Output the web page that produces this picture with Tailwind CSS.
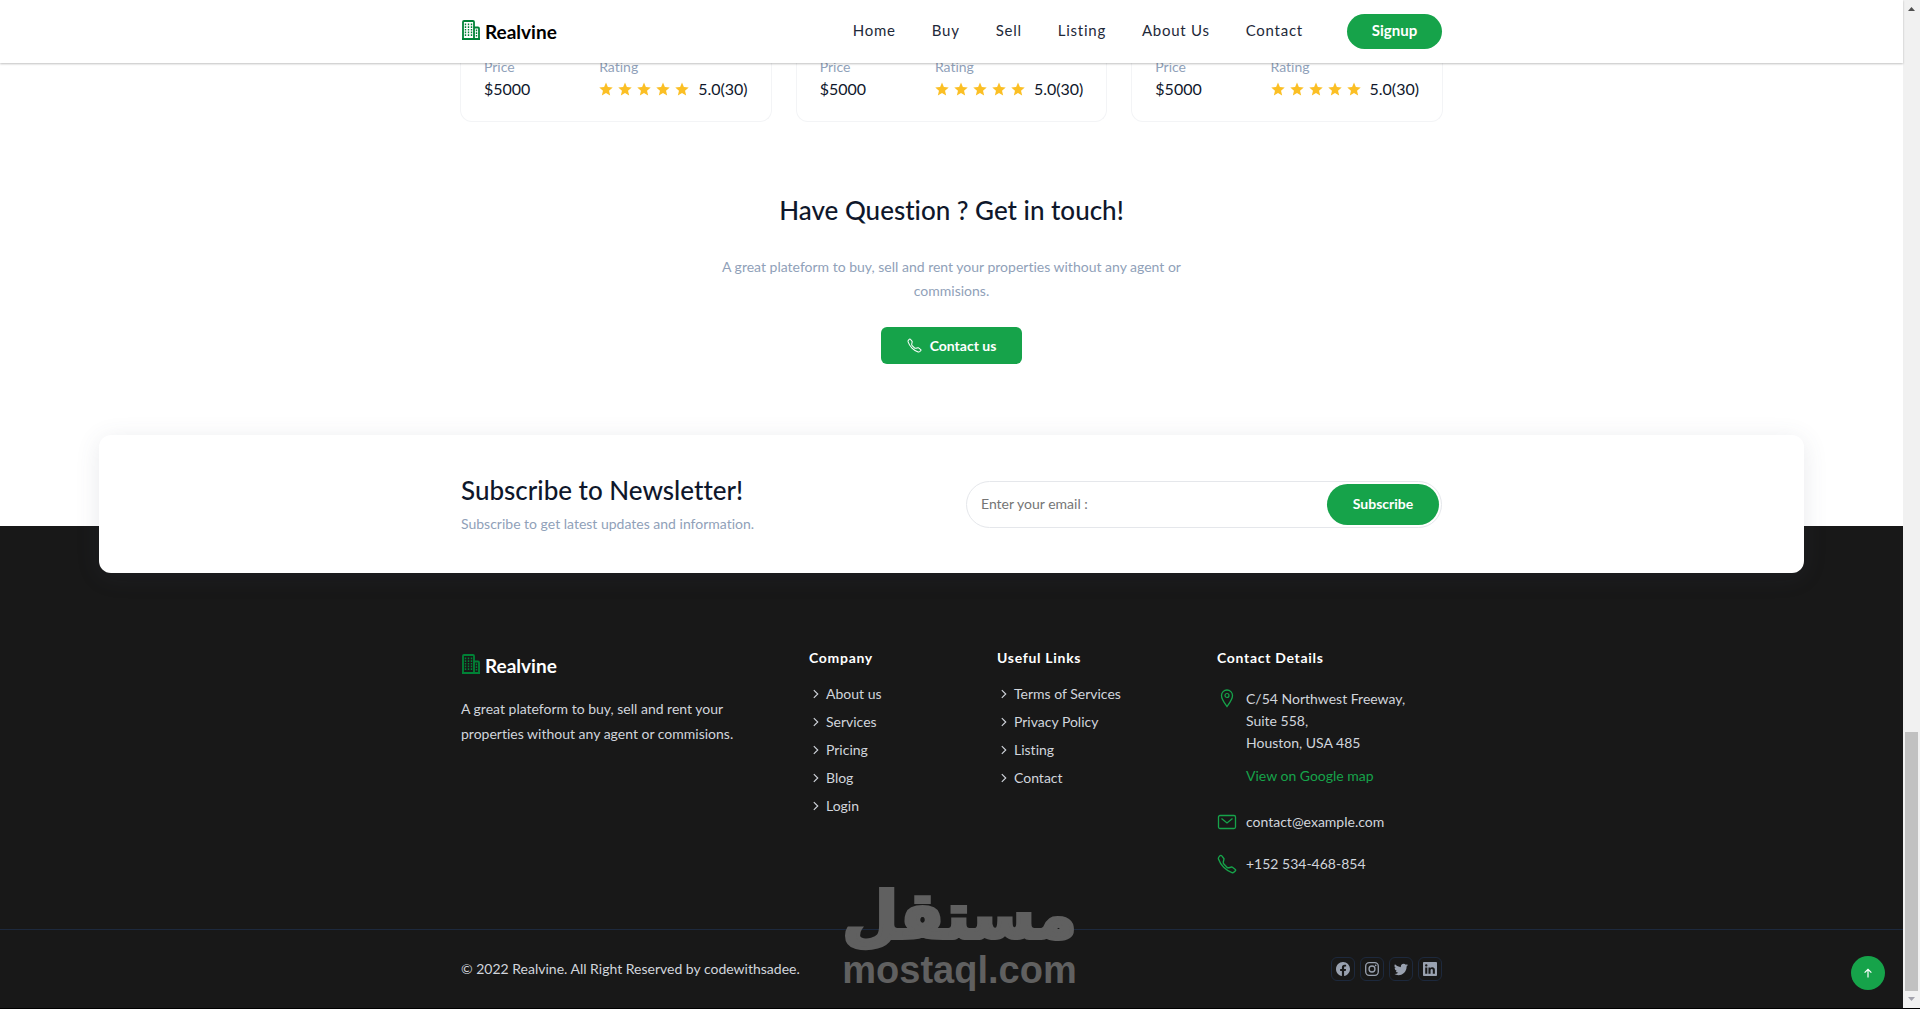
<!DOCTYPE html>
<html lang="en">
<head>
    <meta charset="UTF-8">
    <meta name="viewport" content="width=device-width, initial-scale=1.0">
    <title>Realvine - Real Estate</title>
    <script src="https://cdn.jsdelivr.net/npm/@tailwindcss/browser@4"></script>
    <style>
        body {
            font-family: Lato, 'Open Sans', sans-serif;
            font-variant-ligatures: none;
        }
    </style>
</head>
<body class="bg-black text-slate-900">
    <!-- Icon set -->
    <svg class="hidden">
        <symbol id="buildings" viewBox="0 0 18 20">
            <path d="M1 19V2q0-1 1-1h9q1 0 1 1v17M12 7.500h4q1 0 1 1V19M0 19h18" fill="none" stroke="currentColor" stroke-width="1.800"/>
            <path d="M3.500 3.500v13M6.500 3.500v13M9.500 3.500v13M14.500 9.500v8" fill="none" stroke="currentColor" stroke-width="1.400" stroke-dasharray="1.700 1"/>
        </symbol>
        <symbol id="star" viewBox="0 0 24 24">
            <path d="M12 1l3.200 7.700 8.300.7-6.300 5.500 1.900 8.100L12 18.700 4.900 23l1.900-8.100L.5 9.400l8.300-.7z" fill="currentColor"/>
        </symbol>
        <symbol id="phone" viewBox="0 0 16 16">
            <path d="M3.654 1.328a.678.678 0 0 0-1.015-.063L1.605 2.300c-.483.484-.661 1.169-.45 1.770a17.600 17.600 0 0 0 4.168 6.608 17.600 17.600 0 0 0 6.608 4.168c.601.211 1.286.033 1.770-.45l1.034-1.034a.678.678 0 0 0-.063-1.015l-2.307-1.794a.68.68 0 0 0-.580-.122l-2.190.547a1.750 1.750 0 0 1-1.657-.459L5.482 8.062a1.750 1.750 0 0 1-.460-1.657l.548-2.190a.68.68 0 0 0-.122-.580z" fill="none" stroke="currentColor" stroke-width="1.100"/>
        </symbol>
        <symbol id="chevron" viewBox="0 0 16 16">
            <path d="M5.500 3.500L10 8l-4.500 4.500" fill="none" stroke="currentColor" stroke-width="1.300"/>
        </symbol>
        <symbol id="pin" viewBox="0 0 20 20">
            <path d="M10 18.500C7.500 15 4.500 11.500 4.500 7.500a5.500 5.500 0 0 1 11 0c0 4-3 7.500-5.500 11z" fill="none" stroke="currentColor" stroke-width="1.300"/>
            <circle cx="10" cy="7.500" r="2" fill="none" stroke="currentColor" stroke-width="1.200"/>
        </symbol>
        <symbol id="mail" viewBox="0 0 20 20">
            <rect x="1.500" y="3.500" width="17" height="13" rx="1.500" fill="none" stroke="currentColor" stroke-width="1.300"/>
            <path d="M4.500 6.500L10 11l5.500-4.500" fill="none" stroke="currentColor" stroke-width="1.300"/>
        </symbol>
        <symbol id="facebook" viewBox="0 0 16 16">
            <path d="M16 8.049c0-4.446-3.582-8.050-8-8.050C3.580 0-.002 3.603-.002 8.050c0 4.017 2.926 7.347 6.750 7.951v-5.625h-2.030V8.050H6.750V6.275c0-2.017 1.195-3.131 3.022-3.131.876 0 1.791.157 1.791.157v1.980h-1.009c-.993 0-1.303.621-1.303 1.258v1.510h2.218l-.354 2.326H9.250V16c3.824-.604 6.750-3.934 6.750-7.951" fill="currentColor"/>
        </symbol>
        <symbol id="instagram" viewBox="0 0 16 16">
            <rect x=".8" y=".8" width="14.400" height="14.400" rx="4" fill="none" stroke="currentColor" stroke-width="1.500"/>
            <circle cx="8" cy="8" r="3.400" fill="none" stroke="currentColor" stroke-width="1.500"/>
            <circle cx="12.200" cy="3.800" r="1" fill="currentColor"/>
        </symbol>
        <symbol id="twitter" viewBox="0 0 16 16">
            <path d="M5.026 15c6.038 0 9.341-5.003 9.341-9.334q.002-.211-.006-.422A6.700 6.700 0 0 0 16 3.542a6.700 6.700 0 0 1-1.889.518 3.300 3.300 0 0 0 1.447-1.817 6.500 6.500 0 0 1-2.087.793A3.286 3.286 0 0 0 7.875 6.030a9.320 9.320 0 0 1-6.767-3.429 3.290 3.290 0 0 0 1.018 4.382A3.300 3.300 0 0 1 .640 6.575v.045a3.290 3.290 0 0 0 2.632 3.218 3.200 3.200 0 0 1-.865.115 3 3 0 0 1-.614-.057 3.280 3.280 0 0 0 3.067 2.277A6.600 6.600 0 0 1 .780 13.580a6 6 0 0 1-.780-.045A9.340 9.340 0 0 0 5.026 15" fill="currentColor"/>
        </symbol>
        <symbol id="linkedin" viewBox="0 0 16 16">
            <path d="M0 1.146C0 .513.526 0 1.175 0h13.650C15.474 0 16 .513 16 1.146v13.708c0 .633-.526 1.146-1.175 1.146H1.175C.526 16 0 15.487 0 14.854zm4.943 12.248V6.169H2.542v7.225zm-1.200-8.212c.837 0 1.358-.554 1.358-1.248-.015-.709-.520-1.248-1.342-1.248S2.400 3.226 2.400 3.934c0 .694.521 1.248 1.327 1.248zm4.908 8.212V9.359c0-.216.016-.432.080-.586.173-.431.568-.878 1.232-.878.869 0 1.216.662 1.216 1.634v3.865h2.401V9.250c0-2.220-1.184-3.252-2.764-3.252-1.274 0-1.845.700-2.165 1.193v.025h-.016l.016-.025V6.169h-2.400c.030.678 0 7.225 0 7.225z" fill="currentColor"/>
        </symbol>
        <symbol id="arrow-up" viewBox="0 0 16 16">
            <path d="M8 14V3M3.500 7.500L8 3l4.500 4.500" fill="none" stroke="currentColor" stroke-width="1.600"/>
        </symbol>
    </svg>

    <div class="flex pb-[2px]">
        <div class="flex-1 min-w-0 bg-white relative">
            <!-- Navbar -->
            <header class="relative z-20 bg-white shadow-[0_1px_2px_rgba(0,0,0,0.25)]">
                <div class="max-w-[981px] mx-auto h-[63px] flex items-center justify-between">
                    <a href="#" class="flex items-end gap-1 text-black">
                        <svg class="w-5 h-5 mb-1 text-green-700"><use href="#buildings"/></svg>
                        <span class="text-[19px] leading-6 font-bold">Realvine</span>
                    </a>
                    <nav class="flex items-center text-[15px] tracking-wider text-gray-800">
                        <div class="flex gap-9 mr-11 pb-[2px]">
                            <a href="#">Home</a>
                            <a href="#">Buy</a>
                            <a href="#">Sell</a>
                            <a href="#">Listing</a>
                            <a href="#">About Us</a>
                            <a href="#">Contact</a>
                        </div>
                        <button class="bg-[#16a34a] text-white font-bold tracking-normal w-[95px] h-[35px] pb-[2px] rounded-full">Signup</button>
                    </nav>
                </div>
            </header>

            <!-- Property Cards -->
            <section class="max-w-[983px] mx-auto grid grid-cols-3 gap-6 -mt-4">
                <div class="border border-t-0 border-gray-100 rounded-b-xl px-[23px] pt-2 pb-[22px] flex justify-between">
                    <div>
                        <p class="text-sm leading-6 text-slate-400">Price</p>
                        <p class="leading-5">$5000</p>
                    </div>
                    <div>
                        <p class="text-sm leading-6 text-slate-400">Rating</p>
                        <div class="flex items-center gap-[5px] leading-5">
                            <svg class="w-[14px] h-[14px] text-[#fbbf24]"><use href="#star"/></svg>
                            <svg class="w-[14px] h-[14px] text-[#fbbf24]"><use href="#star"/></svg>
                            <svg class="w-[14px] h-[14px] text-[#fbbf24]"><use href="#star"/></svg>
                            <svg class="w-[14px] h-[14px] text-[#fbbf24]"><use href="#star"/></svg>
                            <svg class="w-[14px] h-[14px] text-[#fbbf24]"><use href="#star"/></svg>
                            <span class="ml-1">5.0(30)</span>
                        </div>
                    </div>
                </div>
                <div class="border border-t-0 border-gray-100 rounded-b-xl px-[23px] pt-2 pb-[22px] flex justify-between">
                    <div>
                        <p class="text-sm leading-6 text-slate-400">Price</p>
                        <p class="leading-5">$5000</p>
                    </div>
                    <div>
                        <p class="text-sm leading-6 text-slate-400">Rating</p>
                        <div class="flex items-center gap-[5px] leading-5">
                            <svg class="w-[14px] h-[14px] text-[#fbbf24]"><use href="#star"/></svg>
                            <svg class="w-[14px] h-[14px] text-[#fbbf24]"><use href="#star"/></svg>
                            <svg class="w-[14px] h-[14px] text-[#fbbf24]"><use href="#star"/></svg>
                            <svg class="w-[14px] h-[14px] text-[#fbbf24]"><use href="#star"/></svg>
                            <svg class="w-[14px] h-[14px] text-[#fbbf24]"><use href="#star"/></svg>
                            <span class="ml-1">5.0(30)</span>
                        </div>
                    </div>
                </div>
                <div class="border border-t-0 border-gray-100 rounded-b-xl px-[23px] pt-2 pb-[22px] flex justify-between">
                    <div>
                        <p class="text-sm leading-6 text-slate-400">Price</p>
                        <p class="leading-5">$5000</p>
                    </div>
                    <div>
                        <p class="text-sm leading-6 text-slate-400">Rating</p>
                        <div class="flex items-center gap-[5px] leading-5">
                            <svg class="w-[14px] h-[14px] text-[#fbbf24]"><use href="#star"/></svg>
                            <svg class="w-[14px] h-[14px] text-[#fbbf24]"><use href="#star"/></svg>
                            <svg class="w-[14px] h-[14px] text-[#fbbf24]"><use href="#star"/></svg>
                            <svg class="w-[14px] h-[14px] text-[#fbbf24]"><use href="#star"/></svg>
                            <svg class="w-[14px] h-[14px] text-[#fbbf24]"><use href="#star"/></svg>
                            <span class="ml-1">5.0(30)</span>
                        </div>
                    </div>
                </div>
            </section>

            <!-- Get in touch -->
            <section class="pt-[68px] pb-[71px] text-center">
                <h2 class="text-[26px] leading-10 font-medium">Have Question ? Get in touch!</h2>
                <p class="mt-[25px] mx-auto max-w-[500px] text-sm leading-6 text-slate-400">A great plateform to buy, sell and rent your properties without any agent or commisions.</p>
                <button class="mt-6 h-[37px] px-[26px] bg-[#16a34a] text-white text-sm font-bold rounded-md inline-flex items-center gap-2">
                    <svg class="w-[15px] h-[15px]"><use href="#phone"/></svg>Contact us
                </button>
            </section>

            <!-- Newsletter -->
            <section class="relative z-10 mx-[99px] bg-white rounded-xl shadow-[0_4px_24px_rgba(71,85,105,0.12)]">
                <div class="max-w-[981px] mx-auto h-[138px] flex items-center justify-between">
                    <div>
                        <h2 class="text-[26px] leading-10 font-medium">Subscribe to Newsletter!</h2>
                        <p class="text-sm leading-7 text-slate-400">Subscribe to get latest updates and information.</p>
                    </div>
                    <form class="w-[476px] flex items-center border border-gray-200 rounded-full p-[2px]">
                        <input type="email" aria-label="Email" placeholder="Enter your email :" class="flex-1 min-w-0 px-3 text-sm outline-none placeholder:text-[#757575]">
                        <button type="button" class="w-[112px] h-[41px] bg-[#16a34a] text-white text-sm font-bold rounded-full">Subscribe</button>
                    </form>
                </div>
            </section>

            <!-- Footer -->
            <footer class="bg-[#181818] -mt-[47px] pt-[122px] text-sm text-gray-300">
                <div class="max-w-[981px] mx-auto grid grid-cols-[348fr_188fr_220fr_225fr] pb-[54px]">
                    <div class="pt-[6px]">
                        <a href="#" class="flex items-end gap-1 text-white">
                            <svg class="w-5 h-5 mb-1 text-green-700"><use href="#buildings"/></svg>
                            <span class="text-[19px] leading-6 font-bold">Realvine</span>
                        </a>
                        <p class="mt-[18px] max-w-[300px] leading-[25px]">A great plateform to buy, sell and rent your properties without any agent or commisions.</p>
                    </div>
                    <div>
                        <h3 class="text-white font-bold tracking-wider leading-5">Company</h3>
                        <ul class="mt-3 leading-7">
                            <li><a href="#" class="flex items-center gap-[3px]"><svg class="w-[14px] h-[14px]"><use href="#chevron"/></svg>About us</a></li>
                            <li><a href="#" class="flex items-center gap-[3px]"><svg class="w-[14px] h-[14px]"><use href="#chevron"/></svg>Services</a></li>
                            <li><a href="#" class="flex items-center gap-[3px]"><svg class="w-[14px] h-[14px]"><use href="#chevron"/></svg>Pricing</a></li>
                            <li><a href="#" class="flex items-center gap-[3px]"><svg class="w-[14px] h-[14px]"><use href="#chevron"/></svg>Blog</a></li>
                            <li><a href="#" class="flex items-center gap-[3px]"><svg class="w-[14px] h-[14px]"><use href="#chevron"/></svg>Login</a></li>
                        </ul>
                    </div>
                    <div>
                        <h3 class="text-white font-bold tracking-wider leading-5">Useful Links</h3>
                        <ul class="mt-3 leading-7">
                            <li><a href="#" class="flex items-center gap-[3px]"><svg class="w-[14px] h-[14px]"><use href="#chevron"/></svg>Terms of Services</a></li>
                            <li><a href="#" class="flex items-center gap-[3px]"><svg class="w-[14px] h-[14px]"><use href="#chevron"/></svg>Privacy Policy</a></li>
                            <li><a href="#" class="flex items-center gap-[3px]"><svg class="w-[14px] h-[14px]"><use href="#chevron"/></svg>Listing</a></li>
                            <li><a href="#" class="flex items-center gap-[3px]"><svg class="w-[14px] h-[14px]"><use href="#chevron"/></svg>Contact</a></li>
                        </ul>
                    </div>
                    <div>
                        <h3 class="text-white font-bold tracking-wider leading-5">Contact Details</h3>
                        <div class="mt-5 flex gap-[9px]">
                            <svg class="w-5 h-5 shrink-0 text-[#16a34a]"><use href="#pin"/></svg>
                            <div>
                                <p class="leading-[22px]">C/54 Northwest Freeway,<br>Suite 558,<br>Houston, USA 485</p>
                                <a href="#" class="block mt-[11px] leading-[22px] text-[#16a34a]">View on Google map</a>
                            </div>
                        </div>
                        <div class="mt-6 flex items-center gap-[9px] leading-[22px]">
                            <svg class="w-5 h-5 text-[#16a34a]"><use href="#mail"/></svg>
                            <a href="#">contact@example.com</a>
                        </div>
                        <div class="mt-5 flex items-center gap-[9px] leading-[22px]">
                            <svg class="w-5 h-5 text-[#16a34a]"><use href="#phone"/></svg>
                            <a href="#">+152 534-468-854</a>
                        </div>
                    </div>
                </div>
                <div class="border-t border-slate-800">
                    <div class="max-w-[981px] mx-auto h-[78px] flex items-center justify-between">
                        <p>© 2022 Realvine. All Right Reserved by codewithsadee.</p>
                        <div class="flex gap-[5px] text-gray-400">
                            <a href="#" aria-label="Facebook" class="w-6 h-6 flex items-center justify-center border border-slate-800 rounded-md"><svg class="w-[14px] h-[14px]"><use href="#facebook"/></svg></a>
                            <a href="#" aria-label="Instagram" class="w-6 h-6 flex items-center justify-center border border-slate-800 rounded-md"><svg class="w-[14px] h-[14px]"><use href="#instagram"/></svg></a>
                            <a href="#" aria-label="Twitter" class="w-6 h-6 flex items-center justify-center border border-slate-800 rounded-md"><svg class="w-[14px] h-[14px]"><use href="#twitter"/></svg></a>
                            <a href="#" aria-label="LinkedIn" class="w-6 h-6 flex items-center justify-center border border-slate-800 rounded-md"><svg class="w-[14px] h-[14px]"><use href="#linkedin"/></svg></a>
                        </div>
                    </div>
                </div>
            </footer>

            <!-- Watermark -->
            <div class="absolute bottom-4 left-1/2 ml-2 -translate-x-1/2 flex flex-col items-center text-[#606060] pointer-events-none">
                <span lang="ar" dir="rtl" class="font-['DejaVu_Sans'] font-bold text-[64px] leading-[64px] [-webkit-text-stroke:4px_#606060] [stroke-linejoin:round]">مستقل</span>
                <span class="font-['Liberation_Sans'] font-bold text-[38px] leading-[44px]">mostaql.com</span>
            </div>

            <!-- Back to top -->
            <button aria-label="Back to top" class="absolute bottom-[18px] right-[18px] w-[34px] h-[34px] bg-[#16a34a] text-white rounded-full flex items-center justify-center">
                <svg class="w-3 h-3"><use href="#arrow-up"/></svg>
            </button>
        </div>

        <!-- Scroll track -->
        <div class="w-[17px] bg-[#f1f1f1] flex flex-col items-center justify-between">
            <svg class="w-[17px] h-[17px]" viewBox="0 0 17 17"><path d="M5 11h7L8.500 7z" fill="#505050"/></svg>
            <div class="flex flex-col items-center">
                <div class="w-[13px] h-[259px] bg-[#c1c1c1]"></div>
                <svg class="w-[17px] h-[17px]" viewBox="0 0 17 17"><path d="M5 6h7l-3.500 4z" fill="#a3a3ad"/></svg>
            </div>
        </div>
    </div>
</body>
</html>
